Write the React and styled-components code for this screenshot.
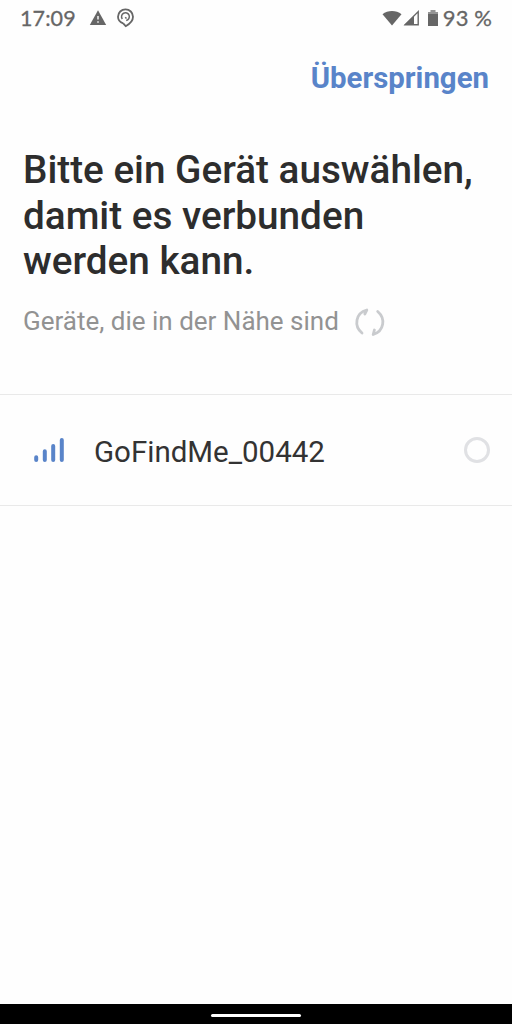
import React from 'react';
import styled, { createGlobalStyle } from 'styled-components';

const GlobalStyle = createGlobalStyle`
  * { box-sizing: border-box; }
  body { margin: 0; background: #fefefe; font-family: Roboto, "Liberation Sans", sans-serif; }
`;

const Screen = styled.div`
  display: flex;
  flex-direction: column;
  width: 512px;
  height: 1024px;
  overflow: hidden;
  background: #fefefe;
`;

const StatusBar = styled.header`
  display: flex;
  align-items: center;
  justify-content: space-between;
  height: 36px;
  padding: 0 20px;
  color: #666;
`;

const StatusGroup = styled.div`
  display: flex;
  align-items: center;
`;

const StatusText = styled.span`
  margin-left: ${(p) => p.$gap}px;
  font-family: Lato, Roboto, sans-serif;
  font-size: ${(p) => p.$size}px;
  font-weight: 400;
  -webkit-text-stroke: 0.3px #666;
  line-height: 24px;
  letter-spacing: ${(p) => p.$spacing}px;
  white-space: nowrap;
`;

const StatusIcon = styled.svg`
  display: block;
  flex: none;
  margin-left: ${(p) => p.$gap}px;
`;

const ActionBar = styled.nav`
  display: flex;
  justify-content: flex-end;
  height: 84px;
  padding: 24px 23px 0 0;
`;

const SkipButton = styled.button`
  height: 36px;
  padding: 0;
  border: 0;
  background: none;
  color: #5984c9;
  font-family: inherit;
  font-size: 29.4px;
  font-weight: 700;
  line-height: 36px;
  white-space: nowrap;
`;

const Intro = styled.section`
  height: 274px;
  padding: 27.4px 23px 0;
`;

const Title = styled.h1`
  margin: 0;
  color: #2d2d2d;
  font-size: 38.7px;
  font-weight: 500;
  line-height: 45.5px;
  white-space: nowrap;
`;

const Nearby = styled.div`
  display: flex;
  align-items: center;
  height: 36px;
  margin-top: 19px;
`;

const NearbyLabel = styled.span`
  color: #929292;
  font-size: 26px;
  line-height: 36px;
  white-space: nowrap;
`;

const RefreshIcon = styled.svg`
  display: block;
  margin: 2px 0 0 15px;
`;

const DeviceRow = styled.div`
  display: flex;
  align-items: center;
  height: 112px;
  padding: 0 22px 0 33px;
  border-top: 1px solid #e9e9e9;
  border-bottom: 1px solid #e9e9e9;
`;

const DeviceName = styled.span`
  flex: 1;
  margin: 3px 0 0 29px;
  color: #333;
  font-size: 29.5px;
  line-height: 36px;
  white-space: nowrap;
`;

const Radio = styled.span`
  width: 26px;
  height: 26px;
  border: 3px solid #e0e1e4;
  border-radius: 50%;
`;

const NavigationBar = styled.footer`
  display: flex;
  align-items: center;
  justify-content: center;
  height: 20px;
  margin-top: auto;
  padding-top: 2px;
  background: #000;
`;

const HomeHandle = styled.span`
  width: 90px;
  height: 3px;
  border-radius: 2px;
  background: #fff;
`;

export default function App() {
  return (
    <>
      <GlobalStyle />
      <Screen>
        <StatusBar>
          <StatusGroup>
            <StatusText $gap={0} $size={21.5} $spacing={0.1}>17:09</StatusText>
            <StatusIcon $gap={13} width="18" height="18" viewBox="0 0 18 18">
              <path d="M9 1.2 17.2 16H.8Z" fill="#666" />
              <path d="M9 7v3.6M9 12.2v1.6" stroke="#fff" strokeWidth="1.4" />
            </StatusIcon>
            <StatusIcon $gap={9} width="20" height="20" viewBox="0 0 20 20" fill="none" stroke="#666" strokeWidth="1.8">
              <path d="M7.2 15.4C4.2 14.3 2 11.8 2 8.8a7.5 7.5 0 0 1 15 0c0 3.8-3.2 7.2-7.3 9.4L7.2 15.4" />
              <path d="M6.3 11A3.9 3.9 0 1 1 10.2 12.5M9.2 9.2l1.3 1.3" strokeWidth="1.5" />
            </StatusIcon>
          </StatusGroup>
          <StatusGroup>
            <StatusIcon $gap={0} width="20" height="18" viewBox="0 0 20 18" fill="#666">
              <path d="M.5 5.2C5.8.8 14.2.8 19.5 5.2L10 16.5Z" />
            </StatusIcon>
            <StatusIcon $gap={1} width="17" height="18" viewBox="0 0 17 18">
              <path d="M15.2 2.6V15.7H2.2Z" fill="none" stroke="#666" strokeWidth="1.4" />
              <path d="M11 6.5V16H1Z" fill="#666" />
            </StatusIcon>
            <StatusIcon $gap={7} width="12" height="18" viewBox="0 0 12 18" fill="#666">
              <path d="M3.5 1h5v2H11v2H1V3h2.5Z" opacity=".7" />
              <path d="M1 5h10v12H1Z" />
            </StatusIcon>
            <StatusText $gap={4} $size={22} $spacing={0.1}>93 %</StatusText>
          </StatusGroup>
        </StatusBar>
        <ActionBar>
          <SkipButton type="button">Überspringen</SkipButton>
        </ActionBar>
        <Intro>
          <Title>
            Bitte ein Gerät auswählen,
            <br />
            damit es verbunden
            <br />
            werden kann.
          </Title>
          <Nearby>
            <NearbyLabel>Geräte, die in der Nähe sind</NearbyLabel>
            <RefreshIcon width="32" height="30" viewBox="0 0 32 30" fill="none" stroke="#c9cbce" strokeWidth="2.8" strokeLinecap="round" strokeLinejoin="round">
              <path d="M8 26C-.4 19 1.5 6 12.8 3L10.8 7" />
              <path d="M23.7 4.5C31.8 11.5 30.3 24 19.2 27.5L20.4 23" />
            </RefreshIcon>
          </Nearby>
        </Intro>
        <DeviceRow>
          <svg width="32" height="28" viewBox="0 0 32 28" stroke="#5984c9" strokeWidth="4" strokeLinecap="round">
            <path d="M3.2 21.3v2.7M11.8 15.3v8.7M20.2 10v14M28.8 4v20" />
          </svg>
          <DeviceName>GoFindMe_00442</DeviceName>
          <Radio role="radio" aria-checked="false" aria-label="GoFindMe_00442" />
        </DeviceRow>
        <NavigationBar>
          <HomeHandle />
        </NavigationBar>
      </Screen>
    </>
  );
}
